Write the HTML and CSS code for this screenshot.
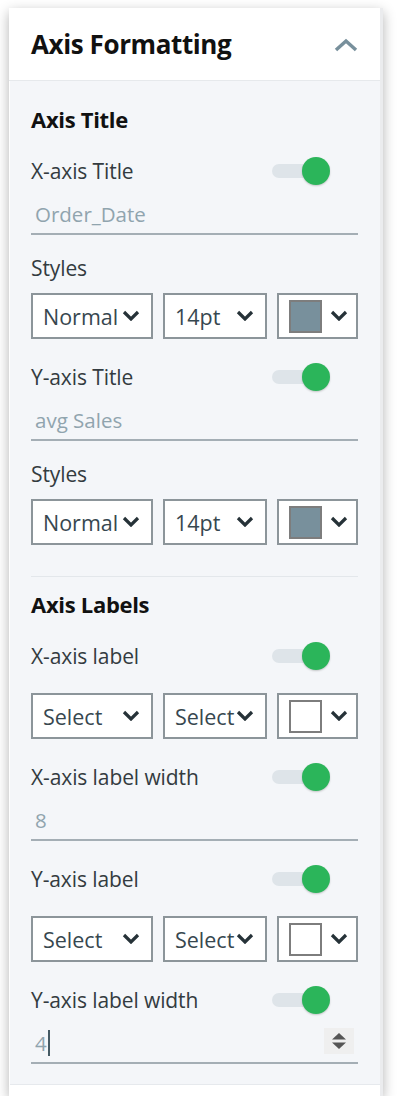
FILE: index.html
```html
<!DOCTYPE html>
<html lang="en">
<head>
    <meta charset="UTF-8">
    <meta name="viewport" content="width=device-width, initial-scale=1.0">
    <title>Axis Formatting</title>
    <link rel="stylesheet" href="styles.css">
</head>
<body>

    <div class="panel">
        <header class="panel-head">
            <h1>Axis Formatting</h1>
            <svg class="collapse" width="24" height="14" viewBox="0 0 24 14">
                <path d="M2 12 L12 3 L22 12" fill="none" stroke="#78909c" stroke-width="3.5" stroke-linejoin="miter"/>
            </svg>
        </header>

        <div class="panel-body">
            <section class="group">
                <h2>Axis Title</h2>

                <div class="row">
                    <span class="label">X-axis Title</span>
                    <span class="toggle"><span class="knob"></span></span>
                </div>
                <div class="field"><span class="placeholder">Order_Date</span></div>

                <div class="row short"><span class="label">Styles</span></div>
                <div class="selects">
                    <div class="select wide">Normal<svg class="chev" viewBox="0 0 18 11"><path d="M2 2 L9 9 L16 2" fill="none" stroke="#263238" stroke-width="3.2"/></svg></div>
                    <div class="select mid">14pt<svg class="chev" viewBox="0 0 18 11"><path d="M2 2 L9 9 L16 2" fill="none" stroke="#263238" stroke-width="3.2"/></svg></div>
                    <div class="select color"><span class="swatch grey"></span><svg class="chev" viewBox="0 0 18 11"><path d="M2 2 L9 9 L16 2" fill="none" stroke="#263238" stroke-width="3.2"/></svg></div>
                </div>

                <div class="row">
                    <span class="label">Y-axis Title</span>
                    <span class="toggle"><span class="knob"></span></span>
                </div>
                <div class="field"><span class="placeholder">avg Sales</span></div>

                <div class="row short"><span class="label">Styles</span></div>
                <div class="selects">
                    <div class="select wide">Normal<svg class="chev" viewBox="0 0 18 11"><path d="M2 2 L9 9 L16 2" fill="none" stroke="#263238" stroke-width="3.2"/></svg></div>
                    <div class="select mid">14pt<svg class="chev" viewBox="0 0 18 11"><path d="M2 2 L9 9 L16 2" fill="none" stroke="#263238" stroke-width="3.2"/></svg></div>
                    <div class="select color"><span class="swatch grey"></span><svg class="chev" viewBox="0 0 18 11"><path d="M2 2 L9 9 L16 2" fill="none" stroke="#263238" stroke-width="3.2"/></svg></div>
                </div>
            </section>

            <section class="group">
                <h2>Axis Labels</h2>

                <div class="row">
                    <span class="label">X-axis label</span>
                    <span class="toggle"><span class="knob"></span></span>
                </div>
                <div class="selects spaced">
                    <div class="select wide">Select<svg class="chev" viewBox="0 0 18 11"><path d="M2 2 L9 9 L16 2" fill="none" stroke="#263238" stroke-width="3.2"/></svg></div>
                    <div class="select mid">Select<svg class="chev" viewBox="0 0 18 11"><path d="M2 2 L9 9 L16 2" fill="none" stroke="#263238" stroke-width="3.2"/></svg></div>
                    <div class="select color"><span class="swatch"></span><svg class="chev" viewBox="0 0 18 11"><path d="M2 2 L9 9 L16 2" fill="none" stroke="#263238" stroke-width="3.2"/></svg></div>
                </div>

                <div class="row">
                    <span class="label">X-axis label width</span>
                    <span class="toggle"><span class="knob"></span></span>
                </div>
                <div class="field"><span class="placeholder">8</span></div>

                <div class="row">
                    <span class="label">Y-axis label</span>
                    <span class="toggle"><span class="knob"></span></span>
                </div>
                <div class="selects spaced">
                    <div class="select wide">Select<svg class="chev" viewBox="0 0 18 11"><path d="M2 2 L9 9 L16 2" fill="none" stroke="#263238" stroke-width="3.2"/></svg></div>
                    <div class="select mid">Select<svg class="chev" viewBox="0 0 18 11"><path d="M2 2 L9 9 L16 2" fill="none" stroke="#263238" stroke-width="3.2"/></svg></div>
                    <div class="select color"><span class="swatch"></span><svg class="chev" viewBox="0 0 18 11"><path d="M2 2 L9 9 L16 2" fill="none" stroke="#263238" stroke-width="3.2"/></svg></div>
                </div>

                <div class="row">
                    <span class="label">Y-axis label width</span>
                    <span class="toggle"><span class="knob"></span></span>
                </div>
                <div class="field number">
                    <span class="placeholder">4</span><span class="caret"></span>
                    <span class="spinner">
                        <svg width="18" height="20" viewBox="0 0 18 20">
                            <path d="M9 2 L16 8.5 L2 8.5 Z" fill="#555"/>
                            <path d="M2 11.5 L16 11.5 L9 18 Z" fill="#555"/>
                        </svg>
                    </span>
                </div>
            </section>
        </div>

        <div class="panel-foot"></div>
    </div>

</body>
</html>
```

FILE: styles.css
```css
* {
    box-sizing: border-box;
    margin: 0;
    padding: 0;
}

body {
    background-color: #ffffff;
    font-family: 'Open Sans', 'Noto Sans', sans-serif;
    color: #333b40;
    padding: 8px 15px 0 9px;
}

.panel {
    width: 374px;
    background: #ffffff;
    border-right: 3px solid #ebecee;
    box-shadow: 0 4px 12px rgba(0,0,0,0.3);
}

.panel-head {
    height: 73px;
    display: flex;
    align-items: center;
    justify-content: space-between;
    padding: 0 22px 0 22px;
    border-bottom: 1px solid #e6e9ec;
}

.panel-head h1 {
    font-size: 26px;
    font-weight: 700;
    color: #111;
    letter-spacing: -0.4px;
}

.collapse {
    display: block;
    margin-top: 2px;
}

.panel-body {
    background-color: #f4f6f9;
    margin-left: 1px;
    padding: 24px 22px 20px 21px;
    border-bottom: 1px solid #e6e9ed;
}

.group h2 {
    font-size: 22px;
    font-weight: 700;
    color: #111;
    height: 28px;
    line-height: 28px;
    margin-bottom: 20px;
    letter-spacing: -0.3px;
}

.group + .group {
    border-top: 1px solid #e3e7eb;
    margin-top: 31px;
    padding-top: 13px;
}

.row {
    height: 36px;
    display: flex;
    align-items: center;
    justify-content: space-between;
    margin-top: 20px;
}

.group h2 + .row {
    margin-top: 0;
}

.row.short {
    margin-top: 15px;
}

.label {
    font-size: 21px;
    color: #333b40;
    letter-spacing: -0.1px;
}

.toggle {
    position: relative;
    width: 49px;
    height: 14px;
    border-radius: 7px;
    background: #dee4e9;
    margin-right: 37px;
}

.knob {
    position: absolute;
    right: -9px;
    top: -7px;
    width: 28px;
    height: 28px;
    border-radius: 50%;
    background: #2bb55a;
    box-shadow: 0 1px 2px rgba(0,0,0,0.2);
}

.field {
    height: 46px;
    padding: 6px 0 0 4px;
    border-bottom: 2px solid #a4aeb5;
    display: flex;
    align-items: center;
}

.placeholder {
    font-size: 20.5px;
    color: #90a4ae;
    line-height: 38px;
}

.field.number {
    position: relative;
}

.caret {
    width: 2px;
    height: 26px;
    background: #455a64;
    margin-left: 1px;
}

.spinner {
    position: absolute;
    right: 4px;
    top: 10px;
    width: 30px;
    height: 26px;
    background: #efefef;
    display: flex;
    align-items: center;
    justify-content: center;
}

.spinner svg {
    display: block;
}

.selects {
    display: flex;
    gap: 10px;
    margin-top: 7px;
}

.selects.spaced {
    margin-top: 19px;
}

.select {
    position: relative;
    height: 46px;
    border: 2px solid #8c959a;
    background: #ffffff;
    font-size: 21.5px;
    color: #37474f;
    display: flex;
    align-items: center;
    padding-left: 10px;
    overflow: hidden;
    white-space: nowrap;
}

.select.wide {
    width: 122px;
}

.select.mid {
    width: 104px;
}

.select.color {
    width: 81px;
}

.chev {
    position: absolute;
    right: 11px;
    top: 15px;
    width: 18px;
    height: 11px;
}

.select.color .chev {
    right: 8px;
}

.swatch {
    width: 33px;
    height: 33px;
    border: 2px solid #7d7d7d;
    background: #ffffff;
}

.swatch.grey {
    background: #78909c;
}

.panel-foot {
    height: 11px;
}
```
